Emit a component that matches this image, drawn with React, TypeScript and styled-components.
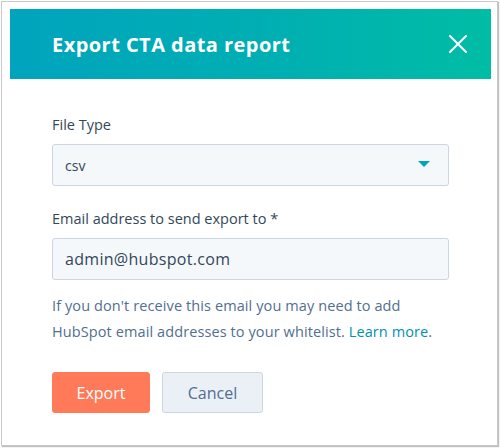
import React, { useState } from "react";
import styled, { createGlobalStyle } from "styled-components";

const GlobalStyle = createGlobalStyle`
  html, body {
    margin: 0;
    padding: 0;
    background: #ffffff;
  }
  body {
    font-family: "Open Sans", "Lato", "Liberation Sans", sans-serif;
    color: #33475b;
  }
`;

const Page = styled.div`
  width: 500px;
  height: 448px;
  padding: 1px 0 0 1px;
  box-sizing: border-box;
`;

const Dialog = styled.div`
  width: 497px;
  height: 445px;
  box-sizing: border-box;
  border: 1px solid #c9c9c9;
  box-shadow: 1px 1px 1px rgba(0, 0, 0, 0.25);
  padding: 7px 6px 0 8px;
  background: #ffffff;
`;

const Header = styled.div`
  height: 70px;
  display: flex;
  align-items: center;
  justify-content: space-between;
  padding: 0 24px 0 42px;
  background: linear-gradient(90deg, #00a4bd 0%, #00afb2 55%, #00bda5 100%);
`;

const Title = styled.h1`
  margin: 0;
  font-size: 20px;
  font-weight: 700;
  color: #ffffff;
  letter-spacing: 0.45px;
`;

const CloseButton = styled.button`
  width: 18px;
  height: 18px;
  padding: 0;
  border: 0;
  background: none;
  cursor: pointer;
  display: flex;
`;

const Body = styled.div`
  padding: 36px 42px 0 42px;
`;

const Field = styled.div<{ $gap?: number }>`
  display: flex;
  flex-direction: column;
  margin-top: ${(p) => p.$gap ?? 0}px;
`;

const Label = styled.label`
  font-size: 14.5px;
  line-height: 20px;
  color: #33475b;
  margin-bottom: 9px;
`;

const SelectBox = styled.div`
  height: 42px;
  box-sizing: border-box;
  border: 1px solid #cbd6e2;
  border-radius: 3px;
  background: #f5f8fa;
  display: flex;
  align-items: center;
  justify-content: space-between;
  padding: 0 18px 0 12px;
  font-size: 14px;
  color: #33475b;
  cursor: pointer;
`;

const Caret = styled.span`
  width: 0;
  height: 0;
  border-left: 6px solid transparent;
  border-right: 6px solid transparent;
  border-top: 6px solid #00a4bd;
  margin-top: -2px;
`;

const Input = styled.input`
  height: 42px;
  box-sizing: border-box;
  border: 1px solid #cbd6e2;
  border-radius: 3px;
  background: #f5f8fa;
  padding: 0 12px;
  font-family: "Open Sans", "Lato", "Liberation Sans", sans-serif;
  font-size: 16px;
  letter-spacing: 0.3px;
  color: #33475b;
  outline: none;
`;

const Help = styled.p`
  margin: 13px 0 0 0;
  font-size: 14.5px;
  line-height: 26px;
  letter-spacing: 0.1px;
  color: #516f90;
  a {
    color: #0091ae;
    text-decoration: none;
  }
`;

const Actions = styled.div`
  display: flex;
  gap: 12px;
  margin-top: 27px;
`;

const Button = styled.button<{ $primary?: boolean }>`
  height: 41px;
  width: ${(p) => (p.$primary ? 98 : 101)}px;
  box-sizing: border-box;
  border-radius: 3px;
  border: 1px solid ${(p) => (p.$primary ? "#ff7a59" : "#cbd6e2")};
  background: ${(p) => (p.$primary ? "#ff7a59" : "#eaf0f6")};
  color: ${(p) => (p.$primary ? "#ffffff" : "#506e91")};
  font-family: "Open Sans", "Lato", "Liberation Sans", sans-serif;
  font-size: 16px;
  cursor: pointer;
`;

export default function App() {
  const [email, setEmail] = useState("admin@hubspot.com");

  return (
    <Page>
      <GlobalStyle />
      <Dialog>
        <Header>
          <Title>Export CTA data report</Title>
          <CloseButton aria-label="Close">
            <svg width="18" height="18" viewBox="0 0 18 18">
              <path d="M1 1 L17 17 M17 1 L1 17" stroke="#ffffff" strokeWidth="2" strokeLinecap="round" />
            </svg>
          </CloseButton>
        </Header>
        <Body>
          <Field>
            <Label>File Type</Label>
            <SelectBox>
              <span>csv</span>
              <Caret />
            </SelectBox>
          </Field>
          <Field $gap={23}>
            <Label>Email address to send export to *</Label>
            <Input value={email} onChange={(e) => setEmail(e.target.value)} />
          </Field>
          <Help>
            If you don't receive this email you may need to add
            <br />
            HubSpot email addresses to your whitelist. <a href="#">Learn more</a>.
          </Help>
          <Actions>
            <Button $primary>Export</Button>
            <Button>Cancel</Button>
          </Actions>
        </Body>
      </Dialog>
    </Page>
  );
}
